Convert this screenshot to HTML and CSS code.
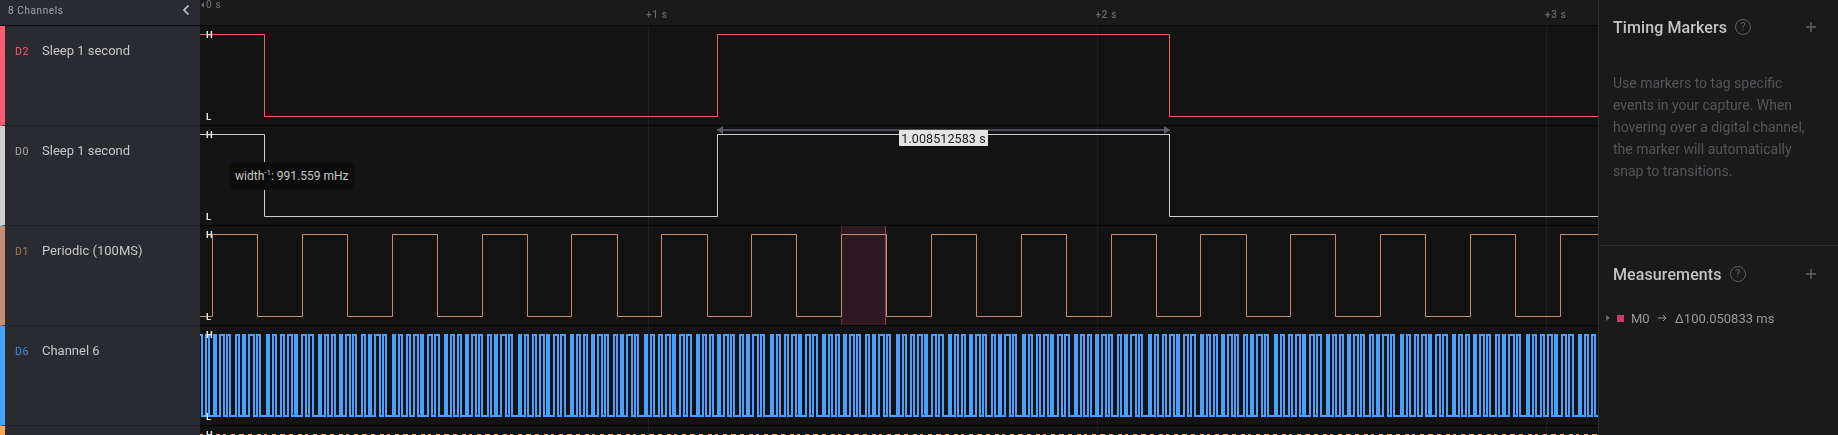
FILE: index.html
```html
<!DOCTYPE html>
<html lang="en">
<head>
    <meta charset="UTF-8">
    <title>Logic capture</title>
    <link rel="stylesheet" href="styles.css">
</head>
<body>
    <div class="app">
        <aside class="channels">
            <header class="channels-head">
                <span>8 Channels</span>
                <svg class="chevron" width="10" height="12" viewBox="0 0 10 12"><path d="M7.5 1.5 L3 6 L7.5 10.5"/></svg>
            </header>
            <div class="channel ch-red"><span class="ch-id">D2</span><span class="ch-name">Sleep 1 second</span></div>
            <div class="channel ch-white"><span class="ch-id">D0</span><span class="ch-name">Sleep 1 second</span></div>
            <div class="channel ch-brown"><span class="ch-id">D1</span><span class="ch-name">Periodic (100MS)</span></div>
            <div class="channel ch-blue"><span class="ch-id">D6</span><span class="ch-name">Channel 6</span></div>
            <div class="channel ch-orange"></div>
        </aside>

        <main class="timeline">
            <div class="ruler">
                <span class="tick tick-zero"><i class="tick-arrow"></i>0 s</span>
                <span class="tick">+1 s</span>
                <span class="tick">+2 s</span>
                <span class="tick">+3 s</span>
            </div>
            <div class="plot">
                <div class="wave-row">
                    <svg class="wave wave-red"><path d="M0 8.5H64.5V90.5H517.5V8.5H969.5V90.5H1398"/></svg>
                    <b class="lvl lvl-h">H</b><b class="lvl lvl-l">L</b>
                </div>
                <div class="wave-row">
                    <svg class="wave wave-white"><path d="M0 8.5H64.5V90.5H517.5V8.5H969.5V90.5H1398"/></svg>
                    <b class="lvl lvl-h">H</b><b class="lvl lvl-l">L</b>
                </div>
                <div class="wave-row">
                    <svg class="wave wave-brown"><path id="wave-periodic"/></svg>
                    <b class="lvl lvl-h">H</b><b class="lvl lvl-l">L</b>
                </div>
                <div class="wave-row">
                    <svg class="wave wave-blue"><path id="wave-dense"/></svg>
                    <b class="lvl lvl-h">H</b><b class="lvl lvl-l">L</b>
                </div>
                <div class="wave-row">
                    <svg class="wave wave-orange"><path id="wave-last"/></svg>
                    <b class="lvl lvl-h">H</b>
                </div>

                <div class="selection"></div>
                <div class="tooltip">width<sup>-1</sup>: 991.559 mHz</div>
                <div class="span-bar">
                    <span class="span-arrow span-arrow-l"></span>
                    <span class="span-arrow span-arrow-r"></span>
                    <span class="span-label">1.008512583 s</span>
                </div>
            </div>
        </main>

        <aside class="panel">
            <section class="panel-section markers">
                <div class="panel-head">
                    <h2>Timing Markers</h2>
                    <span class="help">?</span>
                    <svg class="plus" width="10" height="10" viewBox="0 0 10 10"><path d="M5 0V10M0 5H10"/></svg>
                </div>
                <p class="hint">Use markers to tag specific events in your capture. When hovering over a digital channel, the marker will automatically snap to transitions.</p>
            </section>
            <section class="panel-section measurements">
                <div class="panel-head">
                    <h2>Measurements</h2>
                    <span class="help">?</span>
                    <svg class="plus" width="10" height="10" viewBox="0 0 10 10"><path d="M5 0V10M0 5H10"/></svg>
                </div>
                <div class="measure">
                    <i class="caret"></i>
                    <i class="swatch"></i>
                    <span>M0</span>
                    <svg class="arrow" width="9" height="8" viewBox="0 0 9 8"><path d="M0 4H8M5 1L8 4L5 7"/></svg>
                    <span>Δ100.050833 ms</span>
                </div>
            </section>
        </aside>
    </div>

    <script src="script.js"></script>
</body>
</html>
```

FILE: styles.css
```css
* {
    box-sizing: border-box;
}

html, body {
    height: 100%;
    margin: 0;
    overflow: hidden;
}

body {
    font-family: 'Roboto', sans-serif;
    background-color: #131313;
    color: #ccc;
}

.app {
    display: flex;
    height: 435px;
    overflow: hidden;
}

/* channel list */
.channels {
    width: 200px;
    flex: none;
    background-color: #2a2b30;
}

.channels-head {
    height: 26px;
    padding: 0 9px 5px 8px;
    display: flex;
    align-items: center;
    justify-content: space-between;
    font-size: 10px;
    letter-spacing: 0.6px;
    color: #a3a4a8;
    border-bottom: 1px solid #0c0c0c;
}

.chevron {
    fill: none;
    stroke: #c8c8c8;
    stroke-width: 1.6;
}

.channel {
    height: 100px;
    display: flex;
    align-items: flex-start;
    border-left: 5px solid;
    border-bottom: 1px solid #212226;
    padding-top: 16px;
}

.ch-id {
    width: 37px;
    padding-left: 10px;
    padding-top: 4px;
    font-size: 10.5px;
    letter-spacing: 0.5px;
    line-height: 12px;
}

.ch-name {
    font-size: 13px;
    line-height: 18px;
    color: #c6c7c9;
}

.ch-red { border-left-color: #ff5c70; }
.ch-red .ch-id { color: #ff5c70; }
.ch-white { border-left-color: #d0d0d0; }
.ch-white .ch-id { color: #a9a9a9; }
.ch-brown { border-left-color: #c48f73; }
.ch-brown .ch-id { color: #a9745a; }
.ch-blue { border-left-color: #4aa0ff; }
.ch-blue .ch-id { color: #3f8ae0; }
.ch-orange { border-left-color: #ffa955; }

/* timeline */
.timeline {
    flex: 1;
    min-width: 0;
}

.ruler {
    height: 26px;
    display: flex;
    background-color: #1a1a1b;
    border-bottom: 1px solid #0a0a0a;
    font-size: 10px;
    font-weight: 500;
    letter-spacing: 0.7px;
    color: #66676c;
}

.tick {
    width: 449.5px;
    flex: none;
    line-height: 12px;
    padding-top: 9px;
}

.tick-zero {
    width: 446px;
    height: 9px;
    padding-top: 0;
    display: flex;
    align-items: center;
    line-height: 9px;
}

.tick-arrow {
    width: 0;
    height: 0;
    margin: 0 2px 0 1px;
    border-top: 3px solid transparent;
    border-bottom: 3px solid transparent;
    border-right: 3px solid #66676c;
}

.plot {
    position: relative;
    background:
        linear-gradient(#1f1f21, #1f1f21) 448px 0 / 1px 100% no-repeat,
        linear-gradient(#1f1f21, #1f1f21) 897px 0 / 1px 100% no-repeat,
        linear-gradient(#1f1f21, #1f1f21) 1346px 0 / 1px 100% no-repeat,
        #131313;
}

.wave-row {
    position: relative;
    height: 100px;
    border-bottom: 1px solid #050505;
}

.wave {
    display: block;
    width: 100%;
    height: 99px;
    fill: none;
    stroke-width: 1;
}

.wave-red { stroke: #f45a6c; }
.wave-white { stroke: #cfcfcf; }
.wave-brown { stroke: #c48f73; }
.wave-blue { stroke: #4aa0ff; stroke-width: 2; }
.wave-orange { stroke: #ffa955; stroke-width: 2; }

.lvl {
    position: absolute;
    left: 6px;
    font-size: 9.5px;
    line-height: 10px;
    font-weight: 700;
    color: #e4e4e4;
}

.lvl-h { top: 4px; }
.lvl-l { top: 86px; }

.selection {
    position: absolute;
    left: 641px;
    top: 200px;
    width: 45px;
    height: 99px;
    background-color: #2e1922;
    border-left: 1px solid #5c2a3c;
    border-right: 1px solid #8a4254;
    mix-blend-mode: lighten;
}

.tooltip {
    position: absolute;
    left: 30px;
    top: 136px;
    width: 124px;
    height: 28px;
    padding: 0 5px;
    background-color: #0d0d0e;
    border-radius: 6px;
    font-size: 12px;
    line-height: 28px;
    white-space: nowrap;
    color: #c8c8c8;
}

.tooltip sup {
    font-size: 8px;
    line-height: 0;
    vertical-align: 5px;
}

.span-bar {
    position: absolute;
    left: 517px;
    top: 103px;
    width: 453px;
    height: 2px;
    background-color: #4c4e56;
}

.span-arrow {
    position: absolute;
    top: -3px;
    width: 0;
    height: 0;
    border-top: 4px solid transparent;
    border-bottom: 4px solid transparent;
}

.span-arrow-l {
    left: 0;
    border-right: 6px solid #5c5e66;
}

.span-arrow-r {
    right: 0;
    border-left: 6px solid #5c5e66;
}

.span-label {
    position: absolute;
    left: 182px;
    top: 1px;
    width: 89px;
    height: 16px;
    background-color: #e4e4e4;
    border-radius: 1px;
    font-size: 12.5px;
    line-height: 17px;
    letter-spacing: 0.1px;
    text-align: center;
    color: #1a1a1a;
}

/* right panel */
.panel {
    width: 240px;
    flex: none;
    background-color: #1a1a1a;
    border-left: 1px solid #2e2e30;
}

.panel-section {
    padding: 0 17px 0 14px;
}

.markers {
    height: 246px;
    border-bottom: 1px solid #2a2a2c;
}

.measurements {
    padding-top: 1px;
}

.panel-head {
    display: flex;
    align-items: center;
    height: 56px;
    padding-bottom: 2px;
}

.panel-head h2 {
    margin: 0;
    font-size: 16px;
    font-weight: 500;
    letter-spacing: 0.1px;
    color: #c4c4c6;
}

.help {
    width: 16px;
    height: 16px;
    margin-left: 8px;
    border: 1px solid #5e5e62;
    border-radius: 50%;
    font-size: 11px;
    line-height: 14px;
    text-align: center;
    color: #5e5e62;
}

.plus {
    margin-left: auto;
    margin-right: 5px;
    fill: none;
    stroke: #66666a;
    stroke-width: 1.4;
}

.hint {
    margin: 16px 0 0;
    font-size: 14px;
    line-height: 22px;
    color: #55555a;
}

.measure {
    display: flex;
    align-items: center;
    height: 18px;
    margin: 6px 0 0 -7px;
    font-size: 13px;
    color: #98989c;
}

.caret {
    width: 0;
    height: 0;
    margin-right: 7px;
    border-top: 3px solid transparent;
    border-bottom: 3px solid transparent;
    border-left: 4px solid #66666a;
}

.swatch {
    width: 7px;
    height: 7px;
    margin-right: 7px;
    background-color: #c93a6c;
}

.arrow {
    margin: 0 8px;
    fill: none;
    stroke: #98989c;
    stroke-width: 1;
}
```

FILE: script.js
```js
// builds the long square waves from their edge positions
function squareWave(edges, startHigh, top, bottom) {
    var high = startHigh;
    var d = 'M0 ' + (high ? top : bottom);
    edges.forEach(function (x) {
        high = !high;
        d += 'H' + x + 'V' + (high ? top : bottom);
    });
    return d + 'H1398';
}

function periodicEdges() {
    var edges = [];
    for (var i = 0; i < 16; i++) {
        var rise = 12 + 89.85 * i;
        edges.push(Math.round(rise) + 0.5, Math.round(rise + 45.3) + 0.5);
    }
    return edges.filter(function (x) { return x < 1398; });
}

function denseEdges(widths) {
    var edges = [];
    var x = 2;
    var i = 0;
    while (x < 1398) {
        edges.push(x);
        x += widths[i % widths.length];
        i++;
    }
    return edges;
}

var denseWidths = [4, 3, 5, 2, 4, 4, 3, 3, 6, 3, 4, 2, 4, 5, 3, 3, 7, 2, 4, 3, 5, 3, 4, 4, 3, 2, 5, 4, 3, 4, 6, 2, 4, 3];
var lastWidths = [6, 2, 7, 2, 5, 1, 7, 2, 6, 3];

document.getElementById('wave-periodic').setAttribute('d', squareWave(periodicEdges(), false, 8.5, 90.5));
document.getElementById('wave-dense').setAttribute('d', squareWave(denseEdges(denseWidths), true, 9, 90));
document.getElementById('wave-last').setAttribute('d', squareWave(denseEdges(lastWidths), true, 9, 90));
```
